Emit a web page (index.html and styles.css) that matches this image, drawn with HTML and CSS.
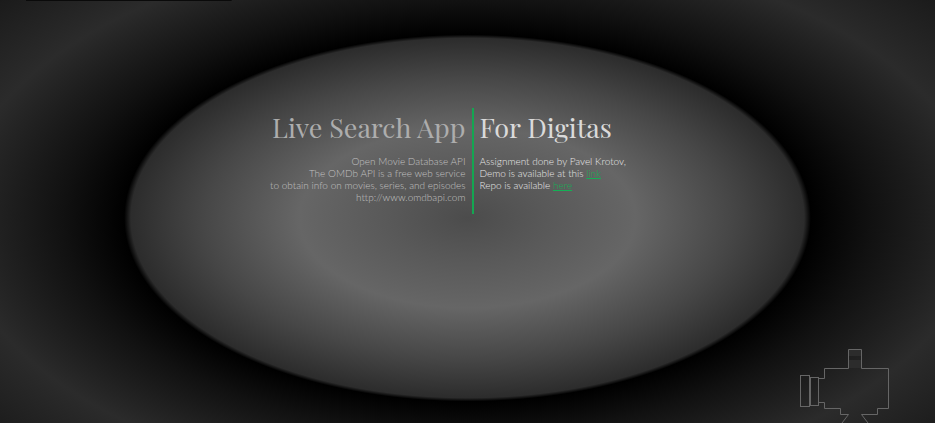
FILE: index.html
```
<!DOCTYPE html>
<html lang="en">
<head>
<meta charset="utf-8">
<title>Live Search App</title>
<link rel="stylesheet" href="styles.css">
</head>
<body>
<main class="intro">
  <section class="panel panel-about">
    <h1 class="title">Live Search App</h1>
    <p class="copy">Open Movie Database API<br>The OMDb API is a free web service<br>to obtain info on movies, series, and episodes<br>http://www.omdbapi.com</p>
  </section>
  <section class="panel panel-client">
    <h2 class="title">For Digitas</h2>
    <p class="copy">Assignment done by Pavel Krotov,<br>Demo is available at this <a href="#demo">link</a><br>Repo is available <a href="#repo">here</a></p>
  </section>
</main>
<footer class="footer">
  <svg class="camera" viewBox="0 0 90 75" width="90" height="75" aria-hidden="true">
    <rect class="finder" x="49" y="2" width="13" height="6"/>
    <rect class="finder" x="49" y="12" width="13" height="8"/>
    <rect x="0.5" y="27.5" width="9" height="31"/>
    <rect x="10.5" y="29.5" width="8" height="28"/>
    <path d="M18.5 30.5H24.5V20.5H48.5V1.5H61.5V20.5H88.5V60.5H77.5V66.5H61.5L68 75"/>
    <path d="M18.5 54.5H24.5V60.5H40.5V66.5H48.5L42 75"/>
  </svg>
</footer>
</body>
</html>
```
FILE: styles.css
```
* {
  box-sizing: border-box;
}

body {
  margin: 0;
  min-height: 100vh;
  display: flex;
  flex-direction: column;
  overflow: hidden;
  font-family: Lato, "Liberation Sans", sans-serif;
  font-weight: 300;
  background:
    linear-gradient(#0a0a0a, #0a0a0a) 26px 0 / 22% 1px no-repeat,
    radial-gradient(ellipse 72% 85% at 50% 218px,
      #4c4c4c 0%, #595959 12%, #666666 25%, #474747 39%, #2c2c2c 50%,
      #000000 51%, #111111 60%, #2b2b2b 76%, #1c1c1c 91%, #131313 100%);
}

.intro {
  flex: 1;
  display: grid;
  grid-template-columns: 1fr 1fr;
  align-items: start;
  padding: 108px 0 0 8px;
}

.panel {
  height: 106px;
  padding: 0 6px;
}

.panel-about {
  text-align: right;
  color: #c0c0c0;
}

.panel-client {
  border-left: 2px solid #14a651;
  color: #e8e8e8;
}

.title {
  margin: 0 0 9px;
  font-family: "Playfair Display", "Liberation Serif", serif;
  font-size: 27px;
  font-weight: 400;
  line-height: 38px;
}

.panel-about .title {
  color: #adadad;
}

.panel-client .title {
  color: #dadada;
}

.copy {
  margin: 0;
  font-size: 10px;
  line-height: 12px;
}

.copy a {
  color: #14b055;
}

.footer {
  display: flex;
  justify-content: flex-end;
  padding-right: 45px;
}

.camera {
  display: block;
  fill: none;
  stroke: #666;
}

.camera .finder {
  fill: #2c2c2c;
  stroke: none;
}
```
